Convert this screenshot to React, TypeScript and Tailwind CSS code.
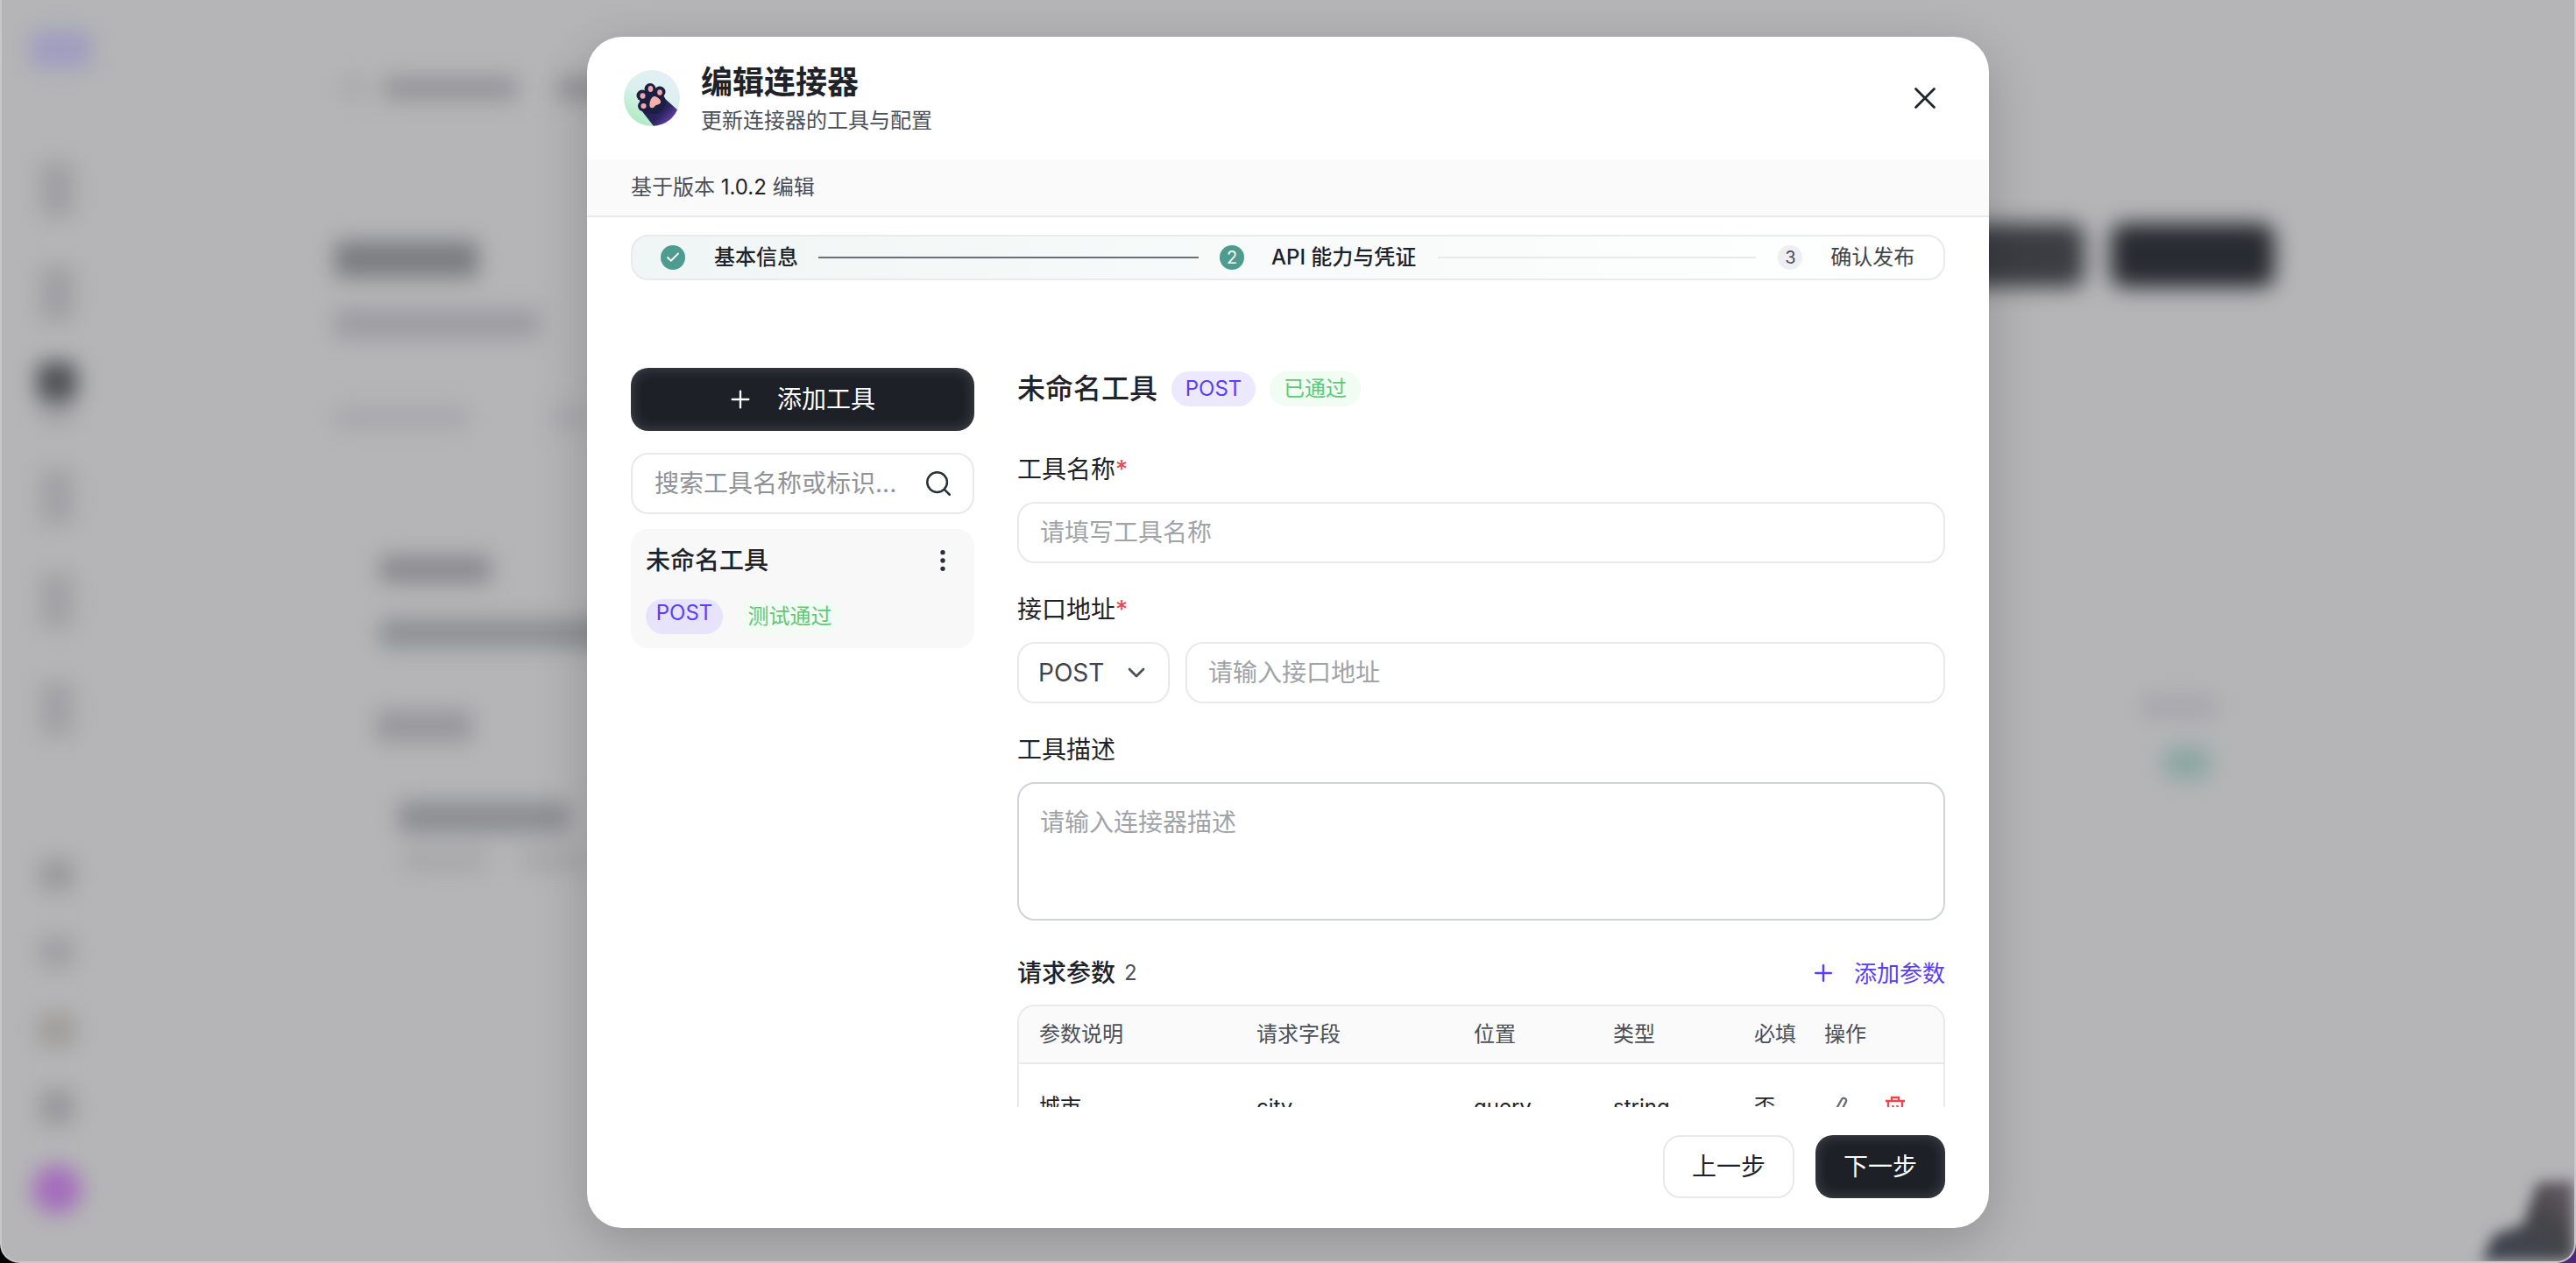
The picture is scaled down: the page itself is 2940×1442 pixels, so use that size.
import { Check, ChevronDown, EllipsisVertical, Plus, Search, X } from "lucide-react";

const PawLogo = () => (
  <svg width="64" height="64" viewBox="0 0 64 64" className="shrink-0">
    <defs>
      <linearGradient id="pawBg" x1="0.7" y1="0" x2="0.2" y2="1">
        <stop offset="0" stopColor="#e6eef9" />
        <stop offset="0.5" stopColor="#d9f0ea" />
        <stop offset="1" stopColor="#a8ebbd" />
      </linearGradient>
      <linearGradient id="pawArm" x1="0.1" y1="0.1" x2="1" y2="0.8">
        <stop offset="0" stopColor="#1c1f42" />
        <stop offset="0.55" stopColor="#2a2560" />
        <stop offset="0.85" stopColor="#6a3ea6" />
        <stop offset="1" stopColor="#d0646e" />
      </linearGradient>
      <clipPath id="pawClip">
        <circle cx="32" cy="32" r="32" />
      </clipPath>
    </defs>
    <g clipPath="url(#pawClip)">
      <rect width="64" height="64" fill="url(#pawBg)" />
      <path d="M44 30 L64 48 L64 64 L34 64 L20 46 Z" fill="url(#pawArm)" />
      <ellipse cx="33" cy="37" rx="15" ry="13" fill="#1c1f42" />
      <circle cx="21" cy="29" r="6.5" fill="#1c1f42" />
      <circle cx="30" cy="21.5" r="6.5" fill="#1c1f42" />
      <circle cx="41" cy="25" r="6.5" fill="#1c1f42" />
      <circle cx="22" cy="41" r="6" fill="#1c1f42" />
      <ellipse cx="21.5" cy="29.5" rx="3" ry="3.2" fill="#f0a8ac" />
      <ellipse cx="30.5" cy="21.5" rx="2.8" ry="3.4" fill="#f0a8ac" />
      <ellipse cx="41" cy="25.5" rx="2.8" ry="3.3" fill="#f0a8ac" />
      <ellipse cx="22.5" cy="41" rx="3.1" ry="2.9" fill="#f0a8ac" />
      <path d="M35 30 C38 30 43 34 42 37 C41 40 37 39 35.5 41 C34 44 30 44 29.5 41 C29 37 31 30 35 30 Z" fill="#f5b0ac" />
    </g>
  </svg>
);

// the blurred page behind the dialog
const BlurredPage = () => (
  <div className="flex h-[1442px] w-[2940px] blur-[12px]">
    <div className="flex w-[126px] shrink-0 flex-col items-center pt-[34px]">
      <div className="ml-[10px] h-[44px] w-[70px] rounded-lg bg-[#a09dc0]" />
      <div className="mt-[106px] h-[64px] w-[40px] rounded-lg bg-[#a0a0a3]" />
      <div className="mt-[55px] h-[64px] w-[40px] rounded-lg bg-[#a0a0a3]" />
      <div className="mt-[46px] h-[46px] w-[46px] rounded-xl bg-[#505256]" />
      <div className="mt-[6px] h-[18px] w-[36px] bg-[#a0a0a3]" />
      <div className="mt-[52px] h-[64px] w-[40px] rounded-lg bg-[#a2a2a5]" />
      <div className="mt-[55px] h-[64px] w-[40px] rounded-lg bg-[#a2a2a5]" />
      <div className="mt-[60px] h-[64px] w-[40px] rounded-lg bg-[#a2a2a5]" />
      <div className="mt-[138px] h-[38px] w-[40px] rounded-lg bg-[#9a9a9d]" />
      <div className="mt-[50px] h-[38px] w-[40px] rounded-lg bg-[#a0a0a3]" />
      <div className="mt-[50px] h-[40px] w-[44px] rounded-lg bg-[#a09e9c]" />
      <div className="mt-[48px] h-[40px] w-[40px] rounded-lg bg-[#98989b]" />
      <div className="mt-[46px] h-[56px] w-[56px] rounded-full bg-[#a46cbc]" />
    </div>
    <div className="flex flex-1 flex-col pl-[254px] pr-[346px]">
      <div className="mt-[88px] flex h-[26px] pl-[10px]">
        <div className="w-[24px] bg-[#a8a8ab]" />
        <div className="ml-[22px] w-[152px] bg-[#949498]" />
        <div className="ml-[46px] w-[70px] bg-[#949498]" />
      </div>
      <div className="mt-[141px] flex h-[73px] justify-between">
        <div className="mt-[20px] h-[42px] w-[164px] bg-[#7c7d81]" />
        <div className="flex gap-[30px]">
          <div className="w-[190px] rounded-2xl bg-[#3c3d43]" />
          <div className="w-[187px] rounded-2xl bg-[#292b32]" />
        </div>
      </div>
      <div className="mt-[25px] h-[33px] w-[234px] bg-[#9c9ca1]" />
      <div className="mt-[78px] flex h-[26px] gap-[96px]">
        <div className="w-[152px] bg-[#a8a8ac]" />
        <div className="w-[40px] bg-[#a8a8ac]" />
      </div>
      <div className="ml-[52px] mt-[144px] h-[32px] w-[126px] bg-[#8b8b8f]" />
      <div className="ml-[52px] mt-[41px] h-[32px] w-[300px] bg-[#8e8f93]" />
      <div className="mt-[62px] flex h-[36px] justify-between">
        <div className="ml-[47px] mt-[10px] h-[36px] w-[110px] bg-[#98989c]" />
        <div className="mr-[67px] mt-[-6px] h-[24px] w-[84px] bg-[#a6a6ab]" />
      </div>
      <div className="mt-[16px] flex h-[36px] justify-end">
        <div className="mr-[74px] w-[52px] rounded-lg bg-[#8aa6a0]" />
      </div>
      <div className="ml-[73px] mt-[26px] h-[36px] w-[195px] bg-[#8c8d91]" />
      <div className="ml-[78px] mt-[18px] flex h-[26px] gap-[40px]">
        <div className="w-[95px] bg-[#a7a7aa]" />
        <div className="w-[74px] bg-[#a7a7aa]" />
      </div>
    </div>
  </div>
);

const Field = ({ label, required }: { label: string; required?: boolean }) => (
  <div className="mb-[17px] flex h-[40px] items-center text-[28px] text-[#1f2329]">
    {label}
    {required && <span className="text-[#e5484d]">*</span>}
  </div>
);

const inputClass =
  "h-[70px] rounded-[20px] border-2 border-[#e9e9eb] bg-white px-[24px] text-[28px] outline-none placeholder:text-[#a0a3a8]";

const Steps = () => (
  <div className="mx-[50px] mt-[20px] flex h-[52px] items-center rounded-[20px] border-2 border-[#e9eaeb] bg-[linear-gradient(90deg,#f0f6f5,#ffffff)] pl-[32px] text-[24px]">
    <span className="flex h-[28px] w-[28px] items-center justify-center rounded-full bg-[#4e9b8f] text-white">
      <Check size={18} strokeWidth={2.5} />
    </span>
    <span className="ml-[33px] font-medium text-[#1f2329]">基本信息</span>
    <span className="ml-[23px] h-[2px] w-[434px] bg-[#6b7078]" />
    <span className="ml-[24px] flex h-[28px] w-[28px] items-center justify-center rounded-full bg-[#4e9b8f] text-[20px] text-white">2</span>
    <span className="ml-[31px] font-medium text-[#1f2329]">API 能力与凭证</span>
    <span className="ml-[25px] h-[2px] w-[363px] bg-[#e9e9eb]" />
    <span className="ml-[25px] flex h-[28px] w-[28px] items-center justify-center rounded-full bg-[#eeeef3] text-[20px] text-[#4b4f57]">3</span>
    <span className="ml-[32px] text-[#3f434a]">确认发布</span>
  </div>
);

const ToolList = () => (
  <div className="w-[392px] shrink-0">
    <button className="flex h-[72px] w-full items-center justify-center gap-[26px] rounded-[20px] bg-[#1d2027] pr-[4px] text-[28px] text-white shadow-[inset_0_0_16px_rgba(255,255,255,0.18)]">
      <Plus size={32} strokeWidth={1.75} />
      添加工具
    </button>
    <div className="mt-[25px] flex h-[70px] items-center rounded-[20px] border-2 border-[#e9e9eb] pl-[25px] pr-[22px]">
      <input
        className="min-w-0 flex-1 bg-transparent text-[28px] outline-none placeholder:text-[#8f9297]"
        placeholder="搜索工具名称或标识..."
      />
      <Search size={34} strokeWidth={1.75} className="shrink-0 text-[#2b2f36]" />
    </div>
    <div className="mt-[17px] h-[136px] rounded-[20px] bg-[#f8f8f9] pl-[17px] pr-[20px] pt-[16px]">
      <div className="flex h-[40px] items-center justify-between">
        <span className="text-[28px] font-medium text-[#1f2329]">未命名工具</span>
        <EllipsisVertical size={32} strokeWidth={2} className="text-[#2b2f36]" />
      </div>
      <div className="mt-[24px] flex h-[40px] gap-[18px] text-[24px]">
        <span className="flex w-[88px] items-center justify-center rounded-full bg-[#e7e3fb] pb-[8px] text-[#5b3df5]">POST</span>
        <span className="flex w-[117px] items-center justify-center rounded-full bg-[#f2fbf4] text-[#5fc878]">测试通过</span>
      </div>
    </div>
  </div>
);

const ParamTable = () => (
  <div className="mt-[16px] rounded-t-[20px] border-2 border-[#e9e9eb] text-[24px]">
    <div className="grid h-[66px] grid-cols-[248px_248px_159px_161px_80px_1fr] items-center rounded-t-[18px] border-b-2 border-[#e9e9eb] bg-[#fafafa] px-[23px] text-[#4b4f57]">
      <span>参数说明</span>
      <span>请求字段</span>
      <span>位置</span>
      <span>类型</span>
      <span>必填</span>
      <span>操作</span>
    </div>
    <div className="grid h-[98px] grid-cols-[248px_248px_159px_161px_80px_1fr] items-center px-[23px] text-[#1f2329]">
      <span>城市</span>
      <span>city</span>
      <span>query</span>
      <span>string</span>
      <span>否</span>
      <span className="flex items-center gap-[40px] pl-[7px]">
        <svg width="22" height="26" viewBox="0 0 22 26" fill="none" stroke="#6b7078" strokeWidth="2.4" className="shrink-0">
          <path d="M3 22 L13 4 C14.5 1.5 19 3 18 6.5 L9 24" />
        </svg>
        <svg width="24" height="26" viewBox="0 0 24 26" fill="none" stroke="#e5484d" strokeWidth="2.4" className="shrink-0">
          <path d="M1 6 H23 M8 6 V2 H16 V6 M4 6 V24 H20 V6 M9.5 11 V17 M14.5 11 V17" />
        </svg>
      </span>
    </div>
  </div>
);

const ToolForm = () => (
  <div className="min-w-0 flex-1">
    <div className="mt-[4px] flex h-[40px] items-center">
      <span className="text-[32px] font-medium text-[#1f2329]">未命名工具</span>
      <span className="ml-[16px] flex h-[40px] w-[96px] items-center justify-center rounded-full bg-[#ece9fe] text-[24px] text-[#5b3df5]">POST</span>
      <span className="ml-[16px] flex h-[40px] w-[104px] items-center justify-center rounded-full bg-[#f1fcf3] text-[24px] text-[#5fc878]">已通过</span>
    </div>
    <div className="mt-[52px]">
      <Field label="工具名称" required />
      <input className={`${inputClass} w-full`} placeholder="请填写工具名称" />
    </div>
    <div className="mt-[33px]">
      <Field label="接口地址" required />
      <div className="flex gap-[18px]">
        <div className="flex h-[70px] w-[174px] shrink-0 items-center justify-between rounded-[20px] border-2 border-[#e9e9eb] pl-[22px] pr-[20px] text-[28px] text-[#3f434a]">
          POST
          <ChevronDown size={32} strokeWidth={2} className="text-[#4b4f57]" />
        </div>
        <input className={`${inputClass} min-w-0 flex-1`} placeholder="请输入接口地址" />
      </div>
    </div>
    <div className="mt-[33px]">
      <Field label="工具描述" />
      <textarea
        className="block h-[158px] w-full resize-none rounded-[20px] border-2 border-[#d0d3da] px-[24px] py-[24px] text-[28px] leading-[40px] outline-none placeholder:text-[#a0a3a8]"
        placeholder="请输入连接器描述"
      />
    </div>
    <div className="mt-[40px] flex h-[40px] items-center justify-between">
      <div className="flex items-center gap-[10px]">
        <span className="text-[28px] font-medium text-[#1f2329]">请求参数</span>
        <span className="text-[24px] text-[#4b4f57]">2</span>
      </div>
      <div className="flex items-center gap-[20px] text-[26px] text-[#5b3df5]">
        <Plus size={30} strokeWidth={2} />
        添加参数
      </div>
    </div>
    <ParamTable />
  </div>
);

export default function App() {
  return (
    <div className="h-[1442px] w-[2940px] overflow-hidden bg-[linear-gradient(90deg,#000000_50%,#4b2a7e_50%)] font-[family-name:Inter,'Noto_Sans_CJK_SC',sans-serif]">
      <div className="relative h-full w-full overflow-hidden rounded-b-[22px] border-x-2 border-b-2 border-[#c9c9cb] bg-[#b5b5b7]">
        <BlurredPage />
        <svg width="110" height="100" viewBox="0 0 110 100" className="absolute bottom-0 right-0 blur-[8px]">
          <defs>
            <linearGradient id="pawBlob" x1="0" y1="1" x2="1" y2="0">
              <stop offset="0" stopColor="#3d4352" />
              <stop offset="0.6" stopColor="#454548" />
              <stop offset="1" stopColor="#6b5f6c" />
            </linearGradient>
          </defs>
          <path d="M4 100 L18 70 L52 58 L68 10 L110 8 L110 100 Z" fill="url(#pawBlob)" />
        </svg>

        <div className="absolute inset-0 flex items-start justify-center pt-[42px]">
          <div className="flex h-[1360px] w-[1600px] flex-col overflow-hidden rounded-[40px] bg-white shadow-[0_16px_60px_rgba(0,0,0,0.2)]">
            <div className="flex h-[140px] shrink-0 items-center pl-[42px] pr-[52px]">
              <PawLogo />
              <div className="ml-[24px] flex-1">
                <div className="mt-[2px] text-[36px] font-semibold leading-[48px] text-[#1f2329]">编辑连接器</div>
                <div className="mt-[2px] text-[24px] leading-[36px] text-[#4b4f57]">更新连接器的工具与配置</div>
              </div>
              <X size={42} strokeWidth={1.6} className="text-[#1f2329]" />
            </div>
            <div className="flex h-[66px] shrink-0 items-center border-b-2 border-[#e9e9eb] bg-[#fafafa] px-[50px] text-[24px] text-[#4b4f57]">
              基于版本&nbsp;<span className="text-[#1f2329]">1.0.2</span>&nbsp;编辑
            </div>
            <div className="h-[1016px] shrink-0 overflow-hidden">
              <Steps />
              <div className="mt-[100px] flex gap-[49px] px-[50px]">
                <ToolList />
                <ToolForm />
              </div>
            </div>
            <div className="flex flex-1 items-start justify-end gap-[24px] px-[50px] pt-[32px] text-[28px]">
              <button className="h-[72px] w-[150px] rounded-[20px] border-2 border-[#e9e9eb] bg-white text-[#1f2329]">上一步</button>
              <button className="h-[72px] w-[148px] rounded-[20px] bg-[#1d2027] text-white shadow-[inset_0_0_16px_rgba(255,255,255,0.18)]">下一步</button>
            </div>
          </div>
        </div>
      </div>
    </div>
  );
}
